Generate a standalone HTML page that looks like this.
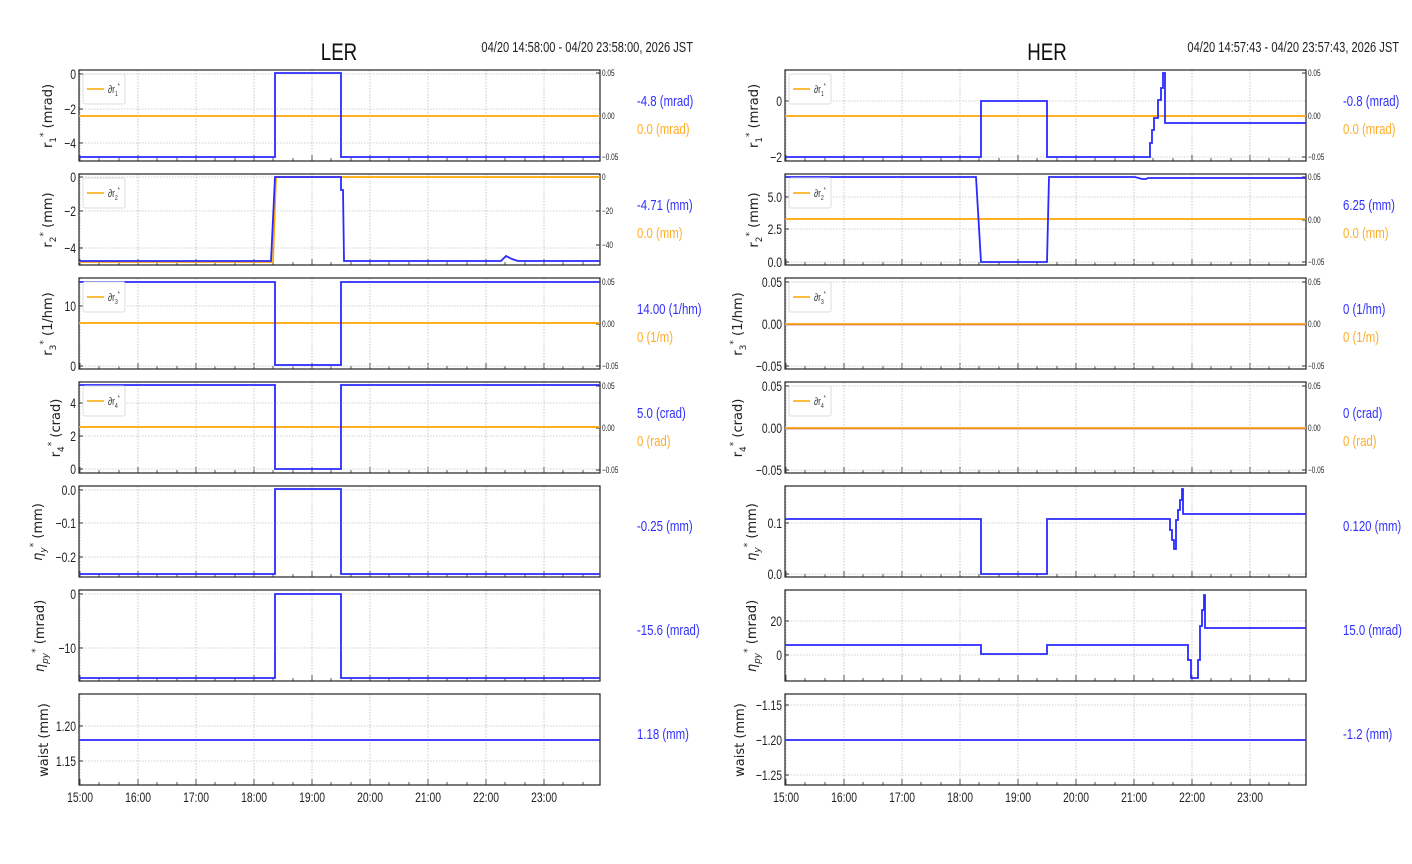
<!DOCTYPE html>
<html><head><meta charset="utf-8"><style>
html,body{margin:0;padding:0;background:#fff;}
svg{display:block}
.t,.tr,.vb,.vo,.lg,.ti{transform-box:fill-box}
.t{font-family:"Liberation Sans",sans-serif;font-size:14px;fill:#222;transform:scaleX(0.74)}
.e{transform-origin:right center}
.m{transform-origin:center center}
.tr{font-family:"Liberation Sans",sans-serif;font-size:9px;fill:#222;transform:scaleX(0.72);transform-origin:left center}
.yl{font-family:"DejaVu Sans","Liberation Sans",sans-serif;font-size:13px;fill:#222}
.vb{font-family:"Liberation Sans",sans-serif;font-size:15px;fill:#3030ff;transform:scaleX(0.76);transform-origin:left center}
.vo{font-family:"Liberation Sans",sans-serif;font-size:15px;fill:#ffad2a;transform:scaleX(0.76);transform-origin:left center}
.lg{font-family:"Liberation Sans",sans-serif;font-size:11px;fill:#333;transform:scaleX(0.75);transform-origin:left center}
.ti{font-family:"Liberation Sans",sans-serif;font-size:24px;fill:#111;transform:scaleX(0.78);transform-origin:center center}
</style></head><body>
<svg width="1412" height="864" viewBox="0 0 1412 864" xmlns="http://www.w3.org/2000/svg">
<defs>
<g id="vg" stroke="#c8c8c8" stroke-width="1" stroke-dasharray="1.5,1.5">
<line x1="80" y1="0" x2="80" y2="91"/><line x1="138" y1="0" x2="138" y2="91"/><line x1="196" y1="0" x2="196" y2="91"/><line x1="254" y1="0" x2="254" y2="91"/><line x1="312" y1="0" x2="312" y2="91"/><line x1="370" y1="0" x2="370" y2="91"/><line x1="428" y1="0" x2="428" y2="91"/><line x1="486" y1="0" x2="486" y2="91"/><line x1="544" y1="0" x2="544" y2="91"/>
</g>
<g id="tk" stroke="#555" stroke-width="1">
<path d="M80 91v-6M138 91v-6M196 91v-6M254 91v-6M312 91v-6M370 91v-6M428 91v-6M486 91v-6M544 91v-6"/>
<path d="M99 91v-3M119 91v-3M157 91v-3M177 91v-3M215 91v-3M235 91v-3M273 91v-3M293 91v-3M331 91v-3M351 91v-3M389 91v-3M409 91v-3M447 91v-3M467 91v-3M505 91v-3M525 91v-3M563 91v-3M583 91v-3"/>
</g>
<g id="leg"><rect x="83" y="4" width="42" height="30" rx="2" fill="#fff" stroke="#ddd"/><line x1="87" y1="19" x2="104" y2="19" stroke="#ffa500" stroke-width="1.5"/></g>
</defs>

<text x="339" y="60" text-anchor="middle" class="ti">LER</text>
<text x="693" y="52" text-anchor="end" class="t e" style="font-size:15px">04/20 14:58:00 - 04/20 23:58:00, 2026 JST</text>
<text x="1047" y="60" text-anchor="middle" class="ti">HER</text>
<text x="1399" y="52" text-anchor="end" class="t e" style="font-size:15px">04/20 14:57:43 - 04/20 23:57:43, 2026 JST</text>

<g><use href="#vg" y="70"/><use href="#vg" y="174"/><use href="#vg" y="278"/><use href="#vg" y="382"/><use href="#vg" y="486"/><use href="#vg" y="590"/><use href="#vg" y="694"/>
<use href="#tk" y="70"/><use href="#tk" y="174"/><use href="#tk" y="278"/><use href="#tk" y="382"/><use href="#tk" y="486"/><use href="#tk" y="590"/><use href="#tk" y="694"/></g>
<g transform="translate(706,0)"><use href="#vg" y="70"/><use href="#vg" y="174"/><use href="#vg" y="278"/><use href="#vg" y="382"/><use href="#vg" y="486"/><use href="#vg" y="590"/><use href="#vg" y="694"/>
<use href="#tk" y="70"/><use href="#tk" y="174"/><use href="#tk" y="278"/><use href="#tk" y="382"/><use href="#tk" y="486"/><use href="#tk" y="590"/><use href="#tk" y="694"/></g>

<g stroke="#d0d0d0" stroke-width="1" stroke-dasharray="1.5,1.5">
<path d="M79 74H600M79 109H600M79 143H600M79 177H600M79 211H600M79 248H600M79 306H600M79 366H600M79 403H600M79 436H600M79 469H600M79 490H600M79 523H600M79 557H600M79 594H600M79 648H600M79 726H600M79 761H600"/>
<path d="M785 101H1306M785 157H1306M785 197H1306M785 229H1306M785 262H1306M785 282H1306M785 324H1306M785 366H1306M785 386H1306M785 428H1306M785 470H1306M785 523H1306M785 574H1306M785 621H1306M785 655H1306M785 705H1306M785 740H1306M785 775H1306"/>
</g>

<g fill="none" stroke="#222" stroke-width="1.2">
<rect x="79" y="70" width="521" height="91"/><rect x="79" y="174" width="521" height="91"/><rect x="79" y="278" width="521" height="91"/><rect x="79" y="382" width="521" height="91"/><rect x="79" y="486" width="521" height="91"/><rect x="79" y="590" width="521" height="91"/><rect x="79" y="694" width="521" height="91"/>
<rect x="785" y="70" width="521" height="91"/><rect x="785" y="174" width="521" height="91"/><rect x="785" y="278" width="521" height="91"/><rect x="785" y="382" width="521" height="91"/><rect x="785" y="486" width="521" height="91"/><rect x="785" y="590" width="521" height="91"/><rect x="785" y="694" width="521" height="91"/>
</g>
<g stroke="#333" stroke-width="1">
<path d="M79 74h4M79 109h4M79 143h4M79 177h4M79 211h4M79 248h4M79 306h4M79 366h4M79 403h4M79 436h4M79 469h4M79 490h4M79 523h4M79 557h4M79 594h4M79 648h4M79 726h4M79 761h4"/>
<path d="M600 73h-4M600 116h-4M600 157h-4M600 177h-4M600 211h-4M600 245h-4M600 282h-4M600 324h-4M600 366h-4M600 386h-4M600 428h-4M600 470h-4"/>
<path d="M785 101h4M785 157h4M785 197h4M785 229h4M785 262h4M785 282h4M785 324h4M785 366h4M785 386h4M785 428h4M785 470h4M785 523h4M785 574h4M785 621h4M785 655h4M785 705h4M785 740h4M785 775h4"/>
<path d="M1306 73h-4M1306 116h-4M1306 157h-4M1306 177h-4M1306 220h-4M1306 262h-4M1306 282h-4M1306 324h-4M1306 366h-4M1306 386h-4M1306 428h-4M1306 470h-4"/>
</g>

<g text-anchor="end">
<text class="t e" x="76" y="79">0</text><text class="t e" x="76" y="114">−2</text><text class="t e" x="76" y="148">−4</text>
<text class="t e" x="76" y="182">0</text><text class="t e" x="76" y="216">−2</text><text class="t e" x="76" y="253">−4</text>
<text class="t e" x="76" y="311">10</text><text class="t e" x="76" y="371">0</text>
<text class="t e" x="76" y="408">4</text><text class="t e" x="76" y="441">2</text><text class="t e" x="76" y="474">0</text>
<text class="t e" x="76" y="495">0.0</text><text class="t e" x="76" y="528">−0.1</text><text class="t e" x="76" y="562">−0.2</text>
<text class="t e" x="76" y="599">0</text><text class="t e" x="76" y="653">−10</text>
<text class="t e" x="76" y="731">1.20</text><text class="t e" x="76" y="766">1.15</text>
<text class="t e" x="782" y="106">0</text><text class="t e" x="782" y="162">−2</text>
<text class="t e" x="782" y="202">5.0</text><text class="t e" x="782" y="234">2.5</text><text class="t e" x="782" y="267">0.0</text>
<text class="t e" x="782" y="287">0.05</text><text class="t e" x="782" y="329">0.00</text><text class="t e" x="782" y="371">−0.05</text>
<text class="t e" x="782" y="391">0.05</text><text class="t e" x="782" y="433">0.00</text><text class="t e" x="782" y="475">−0.05</text>
<text class="t e" x="782" y="528">0.1</text><text class="t e" x="782" y="579">0.0</text>
<text class="t e" x="782" y="626">20</text><text class="t e" x="782" y="660">0</text>
<text class="t e" x="782" y="710">−1.15</text><text class="t e" x="782" y="745">−1.20</text><text class="t e" x="782" y="780">−1.25</text>
</g>
<g>
<text class="tr" x="602" y="76">0.05</text><text class="tr" x="602" y="119">0.00</text><text class="tr" x="602" y="160">−0.05</text>
<text class="tr" x="602" y="180">0</text><text class="tr" x="602" y="214">−20</text><text class="tr" x="602" y="248">−40</text>
<text class="tr" x="602" y="285">0.05</text><text class="tr" x="602" y="327">0.00</text><text class="tr" x="602" y="369">−0.05</text>
<text class="tr" x="602" y="389">0.05</text><text class="tr" x="602" y="431">0.00</text><text class="tr" x="602" y="473">−0.05</text>
<text class="tr" x="1308" y="76">0.05</text><text class="tr" x="1308" y="119">0.00</text><text class="tr" x="1308" y="160">−0.05</text>
<text class="tr" x="1308" y="180">0.05</text><text class="tr" x="1308" y="223">0.00</text><text class="tr" x="1308" y="265">−0.05</text>
<text class="tr" x="1308" y="285">0.05</text><text class="tr" x="1308" y="327">0.00</text><text class="tr" x="1308" y="369">−0.05</text>
<text class="tr" x="1308" y="389">0.05</text><text class="tr" x="1308" y="431">0.00</text><text class="tr" x="1308" y="473">−0.05</text>
</g>

<g text-anchor="middle">
<text class="t m" x="80" y="802">15:00</text><text class="t m" x="138" y="802">16:00</text><text class="t m" x="196" y="802">17:00</text><text class="t m" x="254" y="802">18:00</text><text class="t m" x="312" y="802">19:00</text><text class="t m" x="370" y="802">20:00</text><text class="t m" x="428" y="802">21:00</text><text class="t m" x="486" y="802">22:00</text><text class="t m" x="544" y="802">23:00</text>
<text class="t m" x="786" y="802">15:00</text><text class="t m" x="844" y="802">16:00</text><text class="t m" x="902" y="802">17:00</text><text class="t m" x="960" y="802">18:00</text><text class="t m" x="1018" y="802">19:00</text><text class="t m" x="1076" y="802">20:00</text><text class="t m" x="1134" y="802">21:00</text><text class="t m" x="1192" y="802">22:00</text><text class="t m" x="1250" y="802">23:00</text>
</g>

<g class="yl" text-anchor="middle">
<text transform="translate(52,116) rotate(-90)">r<tspan dy="4" font-size="9">1</tspan><tspan dy="-10" font-size="9">*</tspan><tspan dy="6"> (mrad)</tspan></text>
<text transform="translate(52,220) rotate(-90)">r<tspan dy="4" font-size="9">2</tspan><tspan dy="-10" font-size="9">*</tspan><tspan dy="6"> (mm)</tspan></text>
<text transform="translate(52,324) rotate(-90)">r<tspan dy="4" font-size="9">3</tspan><tspan dy="-10" font-size="9">*</tspan><tspan dy="6"> (1/hm)</tspan></text>
<text transform="translate(60,428) rotate(-90)">r<tspan dy="4" font-size="9">4</tspan><tspan dy="-10" font-size="9">*</tspan><tspan dy="6"> (crad)</tspan></text>
<text transform="translate(42,532) rotate(-90)"><tspan font-style="italic">η</tspan><tspan dy="4" font-size="9" font-style="italic">y</tspan><tspan dy="-10" font-size="9">*</tspan><tspan dy="6"> (mm)</tspan></text>
<text transform="translate(44,636) rotate(-90)"><tspan font-style="italic">η</tspan><tspan dy="4" font-size="9" font-style="italic">py</tspan><tspan dy="-10" font-size="9">*</tspan><tspan dy="6"> (mrad)</tspan></text>
<text transform="translate(48,740) rotate(-90)">waist (mm)</text>
<text transform="translate(758,116) rotate(-90)">r<tspan dy="4" font-size="9">1</tspan><tspan dy="-10" font-size="9">*</tspan><tspan dy="6"> (mrad)</tspan></text>
<text transform="translate(758,220) rotate(-90)">r<tspan dy="4" font-size="9">2</tspan><tspan dy="-10" font-size="9">*</tspan><tspan dy="6"> (mm)</tspan></text>
<text transform="translate(742,324) rotate(-90)">r<tspan dy="4" font-size="9">3</tspan><tspan dy="-10" font-size="9">*</tspan><tspan dy="6"> (1/hm)</tspan></text>
<text transform="translate(742,428) rotate(-90)">r<tspan dy="4" font-size="9">4</tspan><tspan dy="-10" font-size="9">*</tspan><tspan dy="6"> (crad)</tspan></text>
<text transform="translate(756,532) rotate(-90)"><tspan font-style="italic">η</tspan><tspan dy="4" font-size="9" font-style="italic">y</tspan><tspan dy="-10" font-size="9">*</tspan><tspan dy="6"> (mm)</tspan></text>
<text transform="translate(756,636) rotate(-90)"><tspan font-style="italic">η</tspan><tspan dy="4" font-size="9" font-style="italic">py</tspan><tspan dy="-10" font-size="9">*</tspan><tspan dy="6"> (mrad)</tspan></text>
<text transform="translate(744,740) rotate(-90)">waist (mm)</text>
</g>

<g fill="none" stroke-width="1.8" stroke-linejoin="miter">
<path stroke="#ffa500" d="M79 116H600"/>
<path stroke="#2a2aff" d="M79 157H275V73H341V157H600"/>
<path stroke="#ffa500" d="M79 262H273L276 177H600"/>
<path stroke="#2a2aff" d="M79 261H271L275 177H341V190H343L344 261H501L506 256L512 259L518 261H600"/>
<path stroke="#ffa500" d="M79 323H600"/>
<path stroke="#2a2aff" d="M79 282H275V365H341V282H600"/>
<path stroke="#ffa500" d="M79 427H600"/>
<path stroke="#2a2aff" d="M79 385H275V469H341V385H600"/>
<path stroke="#2a2aff" d="M79 574H275V489H341V574H600"/>
<path stroke="#2a2aff" d="M79 678H275V594H341V678H600"/>
<path stroke="#2a2aff" d="M79 740H600"/>
<path stroke="#ffa500" d="M785 116H1306"/>
<path stroke="#2a2aff" d="M785 157H981V101H1047V157H1150V143H1152V130H1154V118H1158V100H1161V88H1163V73H1165V123H1306"/>
<path stroke="#ffa500" d="M785 219H1306"/>
<path stroke="#2a2aff" d="M785 177H976L981 262H1047L1049 177H1135L1142 179H1146L1148 178H1306"/>
<path stroke="#ffa500" d="M785 324H1306"/>
<path stroke="#c07070" stroke-width="0.8" d="M785 325H1306"/>
<path stroke="#ffa500" d="M785 428H1306"/>
<path stroke="#c07070" stroke-width="0.8" d="M785 429H1306"/>
<path stroke="#2a2aff" d="M785 519H981V574H1047V519H1170V530H1172V540H1174V549H1176V520H1178V510H1180V500H1182V489H1183V514H1185V514H1306"/>
<path stroke="#2a2aff" d="M785 645H981V654H1047V645H1188V660H1191V678H1198V660H1200V626H1202V610H1204V595H1205V628H1306"/>
<path stroke="#2a2aff" d="M785 740H1306"/>
</g>

<use href="#leg" y="70"/><use href="#leg" y="174"/><use href="#leg" y="278"/><use href="#leg" y="382"/>
<use href="#leg" x="706" y="70"/><use href="#leg" x="706" y="174"/><use href="#leg" x="706" y="278"/><use href="#leg" x="706" y="382"/>
<g>
<text class="lg" x="108" y="93">∂r<tspan dy="3" font-size="7">1</tspan><tspan dy="-8" font-size="7">*</tspan></text>
<text class="lg" x="108" y="197">∂r<tspan dy="3" font-size="7">2</tspan><tspan dy="-8" font-size="7">*</tspan></text>
<text class="lg" x="108" y="301">∂r<tspan dy="3" font-size="7">3</tspan><tspan dy="-8" font-size="7">*</tspan></text>
<text class="lg" x="108" y="405">∂r<tspan dy="3" font-size="7">4</tspan><tspan dy="-8" font-size="7">*</tspan></text>
<text class="lg" x="814" y="93">∂r<tspan dy="3" font-size="7">1</tspan><tspan dy="-8" font-size="7">*</tspan></text>
<text class="lg" x="814" y="197">∂r<tspan dy="3" font-size="7">2</tspan><tspan dy="-8" font-size="7">*</tspan></text>
<text class="lg" x="814" y="301">∂r<tspan dy="3" font-size="7">3</tspan><tspan dy="-8" font-size="7">*</tspan></text>
<text class="lg" x="814" y="405">∂r<tspan dy="3" font-size="7">4</tspan><tspan dy="-8" font-size="7">*</tspan></text>
</g>

<text class="vb" x="637" y="106">-4.8 (mrad)</text><text class="vo" x="637" y="134">0.0 (mrad)</text>
<text class="vb" x="637" y="210">-4.71 (mm)</text><text class="vo" x="637" y="238">0.0 (mm)</text>
<text class="vb" x="637" y="314">14.00 (1/hm)</text><text class="vo" x="637" y="342">0 (1/m)</text>
<text class="vb" x="637" y="418">5.0 (crad)</text><text class="vo" x="637" y="446">0 (rad)</text>
<text class="vb" x="637" y="531">-0.25 (mm)</text>
<text class="vb" x="637" y="635">-15.6 (mrad)</text>
<text class="vb" x="637" y="739">1.18 (mm)</text>
<text class="vb" x="1343" y="106">-0.8 (mrad)</text><text class="vo" x="1343" y="134">0.0 (mrad)</text>
<text class="vb" x="1343" y="210">6.25 (mm)</text><text class="vo" x="1343" y="238">0.0 (mm)</text>
<text class="vb" x="1343" y="314">0 (1/hm)</text><text class="vo" x="1343" y="342">0 (1/m)</text>
<text class="vb" x="1343" y="418">0 (crad)</text><text class="vo" x="1343" y="446">0 (rad)</text>
<text class="vb" x="1343" y="531">0.120 (mm)</text>
<text class="vb" x="1343" y="635">15.0 (mrad)</text>
<text class="vb" x="1343" y="739">-1.2 (mm)</text>
</svg>
</body></html>
